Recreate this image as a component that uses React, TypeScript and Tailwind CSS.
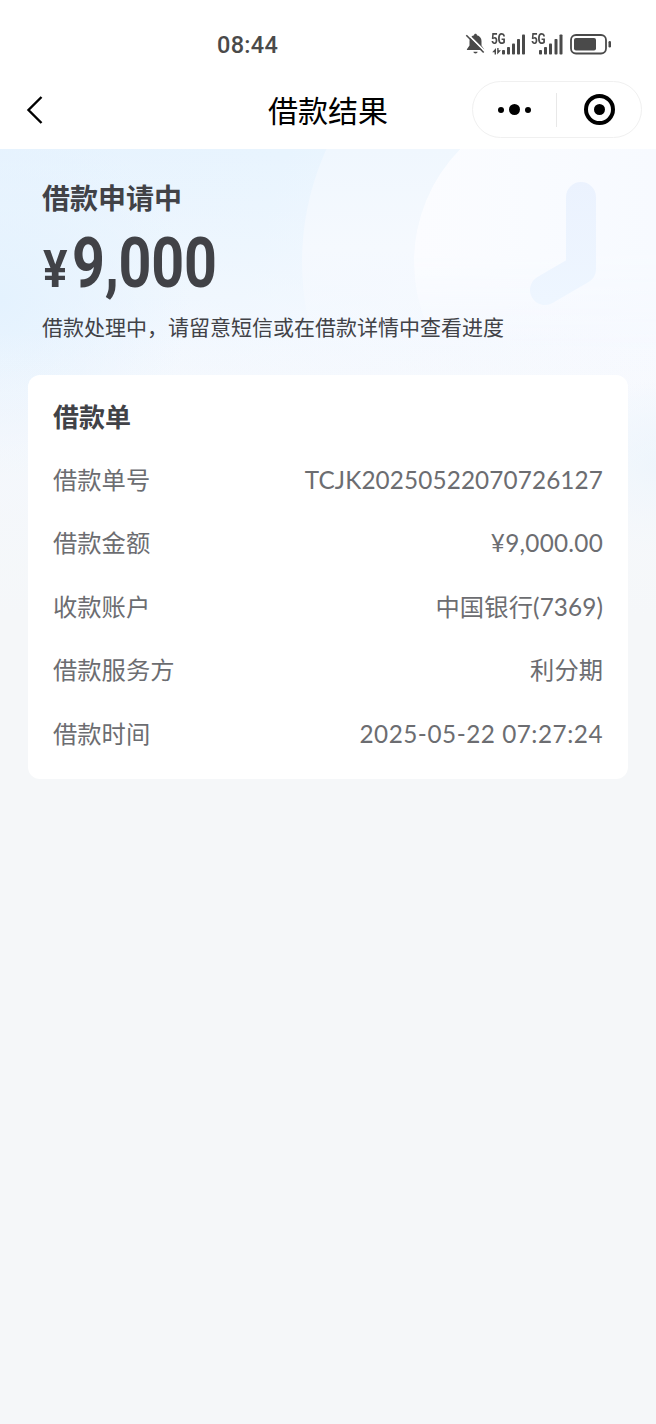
import { clsx } from "clsx";

interface IRow {
  label: string;
  value: string;
  className: string;
}

const rows: IRow[] = [
  {
    label: "借款单号",
    value: "TCJK20250522070726127",
    className: "tracking-[0.120px]",
  },
  { label: "借款金额", value: "¥9,000.00", className: "tracking-[0.250px]" },
  { label: "收款账户", value: "中国银行(7369)", className: "tracking-[0.1px]" },
  { label: "借款服务方", value: "利分期", className: "" },
  {
    label: "借款时间",
    value: "2025-05-22 07:27:24",
    className: "tracking-[0.520px]",
  },
];

const BellOff = () => (
  <svg width="21" height="22" viewBox="0 0 21 22" fill="none">
    <path
      d="M10.500 .8c.9 0 1.400.6 1.400 1.400 3 .8 4.600 3 4.600 5.800v4.600l2.600 3.600v.9H1.900v-.9l2.600-3.600V8c0-2.800 1.600-5 4.600-5.800 0-.8.5-1.400 1.400-1.400z"
      fill="#4a4a4a"
    />
    <path d="M8.400 18.800h4.200c-.2 1-.9 1.600-2.100 1.600s-1.900-.6-2.100-1.600z" fill="#4a4a4a" />
    <path d="M2.600 1.200l17.400 17.300" stroke="#fff" strokeWidth="1.800" />
    <path d="M1.300 2.200l17.400 17.300" stroke="#4a4a4a" strokeWidth="1.600" />
  </svg>
);

const Signal = ({ data = false }: { data?: boolean }) => (
  <div className="relative w-[34px] h-[24px]">
    <span className="absolute left-[-1px] top-[-2px] text-[14px] leading-[13px] font-bold tracking-[-0.3px] origin-left scale-x-[0.850] text-[#4a4a4a]">
      5G
    </span>
    <svg
      className="absolute left-0 top-[-1px]"
      width="34"
      height="24"
      viewBox="0 0 34 24"
      fill="#4a4a4a"
    >
      {data && (
        <>
          <path d="M4 14v6.500H2.600v-2.300H.2z" />
          <path d="M5.200 20.500v-6.500h1.400v2.300H9z" />
        </>
      )}
      <rect x={data ? 10 : 7} y="16" width="3" height="4.500" rx=".8" />
      <rect x={data ? 15 : 12} y="13" width="3" height="7.500" rx=".8" />
      <rect x={data ? 20 : 17} y="9.500" width="3" height="11" rx=".8" />
      <rect x={data ? 25 : 22.500} y="5" width="3" height="15.500" rx=".8" />
      <rect x={data ? 30 : 27.500} y="0.500" width="3" height="20" rx=".8" />
    </svg>
  </div>
);

const Battery = () => (
  <svg width="42" height="22" viewBox="0 0 42 22" fill="none">
    <rect x="1" y="2" width="35" height="18.500" rx="5" stroke="#4a4a4a" strokeWidth="1.800" />
    <rect x="4" y="5" width="22" height="12.500" rx="2" fill="#4a4a4a" />
    <rect x="38.500" y="8" width="2.500" height="6.500" rx="1.200" fill="#4a4a4a" />
  </svg>
);

const StatusBar = () => (
  <div className="h-[74px] flex items-start justify-between pt-[33px] pl-[217px] pr-[44px]">
    <span className="font-['Roboto'] text-[23.500px] leading-[24px] font-medium tracking-[0.3px] text-[#4a4a4a]">
      08:44
    </span>
    <div className="flex items-start font-['Roboto']">
      <BellOff />
      <div className="ml-[6px] pt-[2px]">
        <Signal data />
      </div>
      <div className="ml-[6px] pt-[2px]">
        <Signal />
      </div>
      <div className="ml-[4px]">
        <Battery />
      </div>
    </div>
  </div>
);

const NavBar = () => (
  <div className="h-[75px] grid grid-cols-[184px_1fr_184px] items-start">
    <button className="pl-[26px] pt-[21px]">
      <svg width="18" height="30" viewBox="0 0 18 30" fill="none">
        <path d="M15.500 2L2.500 15l13 13" stroke="#000" strokeWidth="2.400" />
      </svg>
    </button>
    <h1 className="pt-[15px] text-center text-[30px] leading-[40px] text-black">
      借款结果
    </h1>
    <div className="mt-[7px] w-[170px] h-[57px] rounded-full border-[1.500px] border-[#f0f0f0] flex items-center">
      <div className="flex-1 flex items-center justify-center gap-[5px]">
        <i className="size-[6px] rounded-full bg-black" />
        <i className="size-[11px] rounded-full bg-black" />
        <i className="size-[6px] rounded-full bg-black" />
      </div>
      <div className="w-px h-[34px] bg-[#e8e8e8]" />
      <div className="flex-1 flex items-center justify-center pl-px">
        <div className="size-[31px] rounded-full border-4 border-black flex items-center justify-center">
          <i className="size-[11px] rounded-full bg-black" />
        </div>
      </div>
    </div>
  </div>
);

// soft blue backdrop with the clock watermark
const Backdrop = () => (
  <svg
    className="absolute left-0 top-0"
    width="656"
    height="500"
    viewBox="0 0 656 500"
    fill="none"
  >
    <defs>
      <linearGradient id="base" x1="0" y1="0" x2="656" y2="200" gradientUnits="userSpaceOnUse">
        <stop offset="0" stopColor="#e7f3fe" />
        <stop offset=".4" stopColor="#e8f4fe" />
        <stop offset="1" stopColor="#f5f9ff" />
      </linearGradient>
      <radialGradient id="left" cx="0" cy="150" r="190" gradientUnits="userSpaceOnUse">
        <stop offset="0" stopColor="#e4f2fe" />
        <stop offset="1" stopColor="#e4f2fe" stopOpacity="0" />
      </radialGradient>
      <radialGradient id="right" cx="656" cy="320" r="90" gradientUnits="userSpaceOnUse">
        <stop offset="0" stopColor="#e8f4ff" />
        <stop offset="1" stopColor="#e8f4ff" stopOpacity="0" />
      </radialGradient>
      <linearGradient id="haze" x1="0" y1="0" x2="0" y2="230" gradientUnits="userSpaceOnUse">
        <stop offset="0" stopColor="#f8faff" stopOpacity="0" />
        <stop offset="1" stopColor="#f8faff" stopOpacity=".9" />
      </linearGradient>
      <linearGradient id="outer" x1="0" y1="0" x2="0" y2="200" gradientUnits="userSpaceOnUse">
        <stop offset="0" stopColor="#f0f7fe" />
        <stop offset=".5" stopColor="#f5f9fe" />
        <stop offset="1" stopColor="#f8faff" stopOpacity="0" />
      </linearGradient>
      <linearGradient id="inner" x1="414" y1="0" x2="656" y2="0" gradientUnits="userSpaceOnUse">
        <stop offset="0" stopColor="#fbfcff" />
        <stop offset="1" stopColor="#f7faff" />
      </linearGradient>
      <linearGradient id="dissolve" x1="0" y1="100" x2="0" y2="205" gradientUnits="userSpaceOnUse">
        <stop offset="0" stopColor="#fff" />
        <stop offset="1" stopColor="#000" />
      </linearGradient>
      <mask id="soften">
        <rect width="656" height="500" fill="url(#dissolve)" />
      </mask>
      <linearGradient id="hand" x1="0" y1="30" x2="0" y2="155" gradientUnits="userSpaceOnUse">
        <stop offset="0" stopColor="#ebf2fe" />
        <stop offset="1" stopColor="#eef6ff" />
      </linearGradient>
      <linearGradient id="fade" x1="0" y1="180" x2="0" y2="500" gradientUnits="userSpaceOnUse">
        <stop offset="0" stopColor="#f5f7f9" stopOpacity="0" />
        <stop offset=".9" stopColor="#f5f7f9" />
      </linearGradient>
    </defs>
    <rect width="656" height="500" fill="url(#base)" />
    <rect width="656" height="500" fill="url(#haze)" opacity=".85" />
    <rect width="656" height="500" fill="url(#left)" />
    <rect width="656" height="500" fill="url(#right)" />
    <circle cx="575" cy="113" r="273" fill="url(#outer)" />
    <circle cx="575" cy="113" r="161" fill="url(#inner)" mask="url(#soften)" />
    <path
      d="M581 48v72l-36 21"
      stroke="url(#hand)"
      strokeWidth="30"
      strokeLinecap="round"
      strokeLinejoin="round"
    />
    <rect width="656" height="500" fill="url(#fade)" />
  </svg>
);

const Summary = () => (
  <div className="h-[226px] pl-[42px] pt-[28px] text-[#414247]">
    <p className="text-[28px] leading-[40px] font-bold">借款申请中</p>
    <div className="h-[80px] mt-[6px] flex items-baseline font-['Roboto'] font-bold">
      <span className="ml-px w-[29px] origin-left scale-x-[0.880] text-[52px] leading-[80px]">
        ¥
      </span>
      <span className="origin-left scale-x-[0.820] text-[70px] leading-[80px] tracking-[-0.3px]">
        9,000
      </span>
    </div>
    <p className="mt-[7px] text-[21px] leading-[32px]">
      借款处理中，请留意短信或在借款详情中查看进度
    </p>
  </div>
);

const DetailCard = () => (
  <div className="mx-[28px] h-[404px] rounded-xl bg-white px-[25px] pt-[21px]">
    <h2 className="text-[26px] leading-[40px] font-bold text-[#414247]">
      借款单
    </h2>
    <div className="mt-[11px] text-[24.300px] text-[#6c6d71]">
      {rows.map(({ label, value, className }) => (
        <div
          key={label}
          className="h-[63.500px] flex items-center justify-between leading-[32px]"
        >
          <span>{label}</span>
          <span
            className={clsx(
              "mt-0.5 font-['Lato','Noto_Sans_CJK_SC',sans-serif]",
              className
            )}
          >
            {value}
          </span>
        </div>
      ))}
    </div>
  </div>
);

const App = () => {
  return (
    <div className="min-h-[1424px] w-[656px] bg-[#f5f7f9] font-['Noto_Sans_CJK_SC',sans-serif]">
      <header className="bg-white">
        <StatusBar />
        <NavBar />
      </header>
      <main className="relative">
        <Backdrop />
        <div className="relative">
          <Summary />
          <DetailCard />
        </div>
      </main>
    </div>
  );
};

export default App;
